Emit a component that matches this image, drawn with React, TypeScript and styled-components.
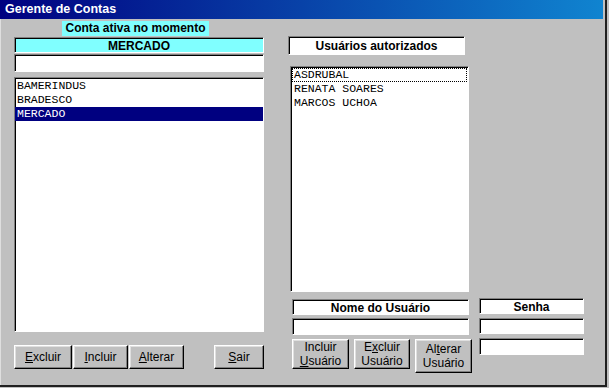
import React from 'react'
import styled, { createGlobalStyle } from 'styled-components'

const GlobalStyle = createGlobalStyle`
  html, body {
    margin: 0;
    padding: 0;
    background: #c0c0c0;
  }
  body {
    font-family: "Liberation Sans", Arial, sans-serif;
    font-size: 12px;
    color: #000;
  }
`

const Window = styled.div`
  width: 607px;
  height: 387px;
  box-sizing: border-box;
  border-right: 2px solid #202020;
  border-bottom: 2px solid #202020;
  background: #c0c0c0;
  display: flex;
  flex-direction: column;
`

const TitleBar = styled.div`
  width: 603px;
  height: 19px;
  flex-shrink: 0;
  background: linear-gradient(to right, #000080, #1084d0);
  color: #fff;
  font-weight: bold;
  font-size: 12.5px;
  line-height: 19px;
  padding-left: 5px;
  box-sizing: border-box;
`

const Body = styled.div`
  flex: 1;
  display: flex;
  align-items: flex-start;
  border-left: 1px solid #dfdfdf;
`

const Column = styled.div<{ $left: number; $width: number }>`
  display: flex;
  flex-direction: column;
  margin-left: ${({ $left }) => $left}px;
  width: ${({ $width }) => $width}px;
`

const sunken = `
  box-sizing: border-box;
  border-style: solid;
  border-width: 1px;
  border-color: #808080 #fff #fff #808080;
  box-shadow: inset 1px 1px #000;
`

const ActiveLabel = styled.div`
  margin-top: 2px;
  margin-left: 48px;
  width: 147px;
  height: 15px;
  background: #80ffff;
  font-weight: bold;
  text-align: center;
  line-height: 15px;
`

const Caption = styled.div<{ $top: number; $left?: number; $width?: number; $height: number; $bg?: string }>`
  ${sunken}
  margin-top: ${({ $top }) => $top}px;
  margin-left: ${({ $left }) => $left || 0}px;
  width: ${({ $width }) => ($width ? `${$width}px` : '100%')};
  height: ${({ $height }) => $height}px;
  background: ${({ $bg }) => $bg || '#fff'};
  font-weight: bold;
  text-align: center;
  line-height: ${({ $height }) => $height - 2}px;
  padding-top: 1px;
`

const TextBox = styled.div<{ $top: number; $left?: number; $width?: number; $height: number }>`
  ${sunken}
  margin-top: ${({ $top }) => $top}px;
  margin-left: ${({ $left }) => $left || 0}px;
  width: ${({ $width }) => ($width ? `${$width}px` : '100%')};
  height: ${({ $height }) => $height}px;
  background: #fff;
`

const ListBox = styled.div<{ $top: number; $left?: number; $width?: number; $height: number; $pad?: number }>`
  ${sunken}
  margin-top: ${({ $top }) => $top}px;
  margin-left: ${({ $left }) => $left || 0}px;
  width: ${({ $width }) => ($width ? `${$width}px` : '100%')};
  height: ${({ $height }) => $height}px;
  background: #fff;
  padding: 1px ${({ $pad }) => $pad || 0}px;
  font-family: "Liberation Mono", "Courier New", monospace;
  font-size: 11.5px;
`

const ListRow = styled.div<{ $selected?: boolean; $focused?: boolean }>`
  height: 14px;
  line-height: 14px;
  padding-left: 2px;
  box-sizing: border-box;
  white-space: pre;
  background: ${({ $selected }) => ($selected ? '#000080' : 'transparent')};
  color: ${({ $selected }) => ($selected ? '#fff' : '#000')};
  outline: ${({ $focused }) => ($focused ? '1px dotted #000' : 'none')};
  outline-offset: -1px;
`

const ButtonRow = styled.div<{ $top: number; $left?: number }>`
  display: flex;
  align-items: flex-start;
  margin-top: ${({ $top }) => $top}px;
  margin-left: ${({ $left }) => $left || 0}px;
`

const Button = styled.button<{ $width: number; $height: number; $gap?: number; $push?: boolean }>`
  width: ${({ $width }) => $width}px;
  height: ${({ $height }) => $height}px;
  margin-left: ${({ $push, $gap }) => ($push ? 'auto' : `${$gap || 0}px`)};
  padding: 0;
  box-sizing: border-box;
  background: #c0c0c0;
  border-style: solid;
  border-width: 1px;
  border-color: #fff #000 #000 #fff;
  box-shadow: inset -1px -1px #808080, inset 1px 1px #dfdfdf;
  font-family: "Liberation Sans", Arial, sans-serif;
  font-size: 12px;
  line-height: 14px;
  color: #000;
  text-align: center;
`

const accounts = ['BAMERINDUS', 'BRADESCO', 'MERCADO']
const users = ['ASDRUBAL', 'RENATA SOARES', 'MARCOS UCHOA']

export default function App() {
  return (
    <>
      <GlobalStyle />
      <Window>
        <TitleBar>Gerente de Contas</TitleBar>
        <Body>
          <Column $left={13} $width={250}>
            <ActiveLabel>Conta ativa no momento</ActiveLabel>
            <Caption $top={1} $height={16} $bg="#80ffff">MERCADO</Caption>
            <TextBox $top={1} $height={18} />
            <ListBox $top={5} $height={255}>
              {accounts.map((a) => (
                <ListRow key={a} $selected={a === 'MERCADO'}>{a}</ListRow>
              ))}
            </ListBox>
            <ButtonRow $top={13}>
              <Button $width={58} $height={24}><u>E</u>xcluir</Button>
              <Button $width={55} $height={24} $gap={1}><u>I</u>ncluir</Button>
              <Button $width={55} $height={24} $gap={1}><u>A</u>lterar</Button>
              <Button $width={50} $height={24} $push><u>S</u>air</Button>
            </ButtonRow>
          </Column>
          <Column $left={24} $width={185}>
            <Caption $top={17} $width={177} $height={19}>Usuários autorizados</Caption>
            <ListBox $top={11} $left={2} $width={179} $height={226} $pad={1}>
              {users.map((u) => (
                <ListRow key={u} $focused={u === 'ASDRUBAL'}>{u}</ListRow>
              ))}
            </ListBox>
            <Caption $top={7} $left={4} $width={177} $height={16}>Nome do Usuário</Caption>
            <TextBox $top={3} $left={4} $width={177} $height={17} />
            <ButtonRow $top={4} $left={4}>
              <Button $width={57} $height={30}>Incluir<br /><u>U</u>suário</Button>
              <Button $width={56} $height={30} $gap={5}>E<u>x</u>cluir<br />Usuário</Button>
              <Button $width={57} $height={34} $gap={5}>Al<u>t</u>erar<br />Usuário</Button>
            </ButtonRow>
          </Column>
          <Column $left={6} $width={105}>
            <Caption $top={279} $height={16}>Senha</Caption>
            <TextBox $top={4} $height={16} />
            <TextBox $top={4} $height={17} />
          </Column>
        </Body>
      </Window>
    </>
  )
}
